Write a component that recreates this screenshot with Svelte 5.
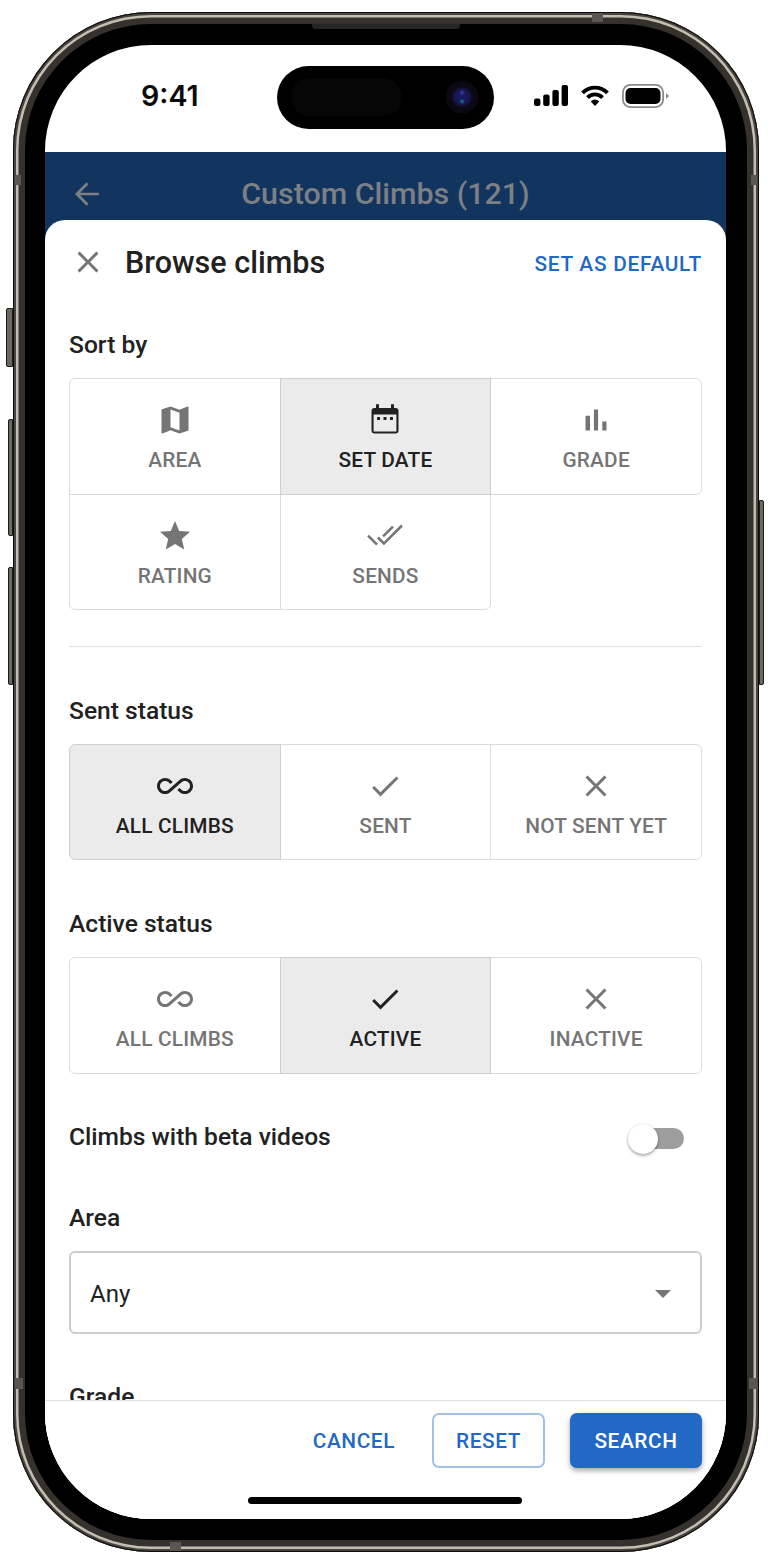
<script lang="ts">
  const check = 'M9 16.17L4.83 12l-1.42 1.41L9 19 21 7l-1.41-1.41z';
  const close = 'M19 6.41L17.59 5 12 10.59 6.41 5 5 6.41 10.59 12 5 17.59 6.41 19 12 13.41 17.59 19 19 17.59 13.41 12z';
  const infinity =
    'M18.6 6.62c-1.44 0-2.8.56-3.77 1.53L12 10.66 10.48 12h.01L7.8 14.39c-.64.64-1.49.99-2.4.99-1.87 0-3.39-1.51-3.39-3.38S3.53 8.62 5.4 8.62c.91 0 1.76.35 2.44 1.03l1.13 1 1.51-1.34L9.22 8.2C8.2 7.18 6.84 6.62 5.4 6.62 2.42 6.62 0 9.04 0 12s2.42 5.38 5.4 5.38c1.44 0 2.8-.56 3.77-1.53l2.83-2.5.01.01L13.52 12h-.01l2.69-2.39c.64-.64 1.49-.99 2.4-.99 1.87 0 3.39 1.51 3.39 3.38s-1.52 3.38-3.39 3.38c-.9 0-1.76-.35-2.44-1.03l-1.14-1.01-1.51 1.34 1.27 1.12c1.02 1.01 2.37 1.57 3.82 1.57 2.98 0 5.4-2.41 5.4-5.38s-2.42-5.37-5.4-5.37z';

  const sortOptions = [
    { label: 'AREA', icon: 'M20.5 3l-.16.03L15 5.1 9 3 3.36 4.9c-.21.07-.36.25-.36.48V20.5c0 .28.22.5.5.5l.16-.03L9 18.9l6 2.1 5.64-1.9c.21-.07.36-.25.36-.48V3.5c0-.28-.22-.5-.5-.5zM15 19l-6-2.11V5l6 2.11V19z' },
    { label: 'SET DATE', active: true, icon: 'M19 4h-1V1.5h-2V4H8V1.5H6V4H5a2 2 0 00-2 2v13a2 2 0 002 2h14a2 2 0 002-2V6a2 2 0 00-2-2zm.6 15.6H4.4V8.4h15.2v11.2zM6.7 10h2v2h-2zm4.3 0h2v2h-2zm4.3 0h2v2h-2z' },
    { label: 'GRADE', icon: 'M5 9.2h3V19H5zM10.6 5h2.8v14h-2.8zm5.6 8H19v6h-2.8z' },
    { label: 'RATING', icon: 'M12 17.27L18.18 21l-1.64-7.03L22 9.24l-7.19-.61L12 2 9.19 8.63 2 9.24l5.46 4.73L5.82 21z' },
    { label: 'SENDS', icon: 'M1.3 11.1l6 6-1.2 1.2-6-6zM7.9 12.4l3.4 3.4L22.7 4.4l1.2 1.2-12.6 12.6-4.6-4.6zM10.1 11.7l6.6-6.6 1.2 1.2-6.6 6.6z' }
  ];
  const sentOptions = [
    { label: 'ALL CLIMBS', active: true, icon: infinity },
    { label: 'SENT', icon: check },
    { label: 'NOT SENT YET', icon: close }
  ];
  const activeOptions = [
    { label: 'ALL CLIMBS', icon: infinity },
    { label: 'ACTIVE', active: true, icon: check },
    { label: 'INACTIVE', icon: close }
  ];
</script>

{#snippet toggleGroup(options)}
  <div class="group">
    {#each options as opt}
      <button type="button" class="opt" class:active={opt.active}>
        <svg width="36" height="36" viewBox="0 0 24 24" fill="currentColor"><path d={opt.icon} /></svg>
        <span>{opt.label}</span>
      </button>
    {/each}
  </div>
{/snippet}

<div class="phone">
  <span class="side vol-mute"></span>
  <span class="side vol-up"></span>
  <span class="side vol-down"></span>
  <span class="side power"></span>
  <span class="speaker"></span>
  <span class="band band-top"></span>
  <span class="band band-left-a"></span>
  <span class="band band-left-b"></span>
  <span class="band band-right-a"></span>
  <span class="band band-right-b"></span>
  <span class="band band-bottom"></span>

  <div class="screen">
    <div class="statusbar">
      <span class="time">9:41</span>
      <div class="island">
        <span class="island-dark"></span>
        <span class="lens"></span>
      </div>
      <div class="status-icons">
        <svg width="34" height="21" viewBox="0 0 34 21" fill="#000">
          <rect x="0" y="13.5" width="6.4" height="7.5" rx="2" />
          <rect x="9.2" y="9.5" width="6.4" height="11.5" rx="2" />
          <rect x="18.4" y="5" width="6.4" height="16" rx="2" />
          <rect x="27.6" y="0" width="6.4" height="21" rx="2" />
        </svg>
        <svg width="28" height="21" viewBox="0 0 28 21" fill="none" stroke="#000" stroke-width="3.8">
          <path d="M1.5 7.8a17.5 17.5 0 0 1 25 0" />
          <path d="M6.5 12.6a10.5 10.5 0 0 1 15 0" />
          <path d="M14 21l-4.2-4.6a5.8 5.8 0 0 1 8.4 0z" fill="#000" stroke="none" />
        </svg>
        <svg width="47" height="24" viewBox="0 0 47 24">
          <rect x="0.9" y="0.9" width="40.2" height="22.2" rx="7.5" fill="none" stroke="#8a8a8a" stroke-width="1.8" />
          <rect x="3.5" y="4" width="35" height="16" rx="5" fill="#000" />
          <path d="M44 9l3 3-3 3z" fill="#8a8a8a" />
        </svg>
      </div>
    </div>

    <header class="appbar">
      <svg width="36" height="36" viewBox="0 0 24 24" fill="#7c7f83">
        <path d="M20 11.1H7.4l5.6-5.6L11.7 4.2 4 12l7.7 7.8 1.3-1.3-5.6-5.6H20z" />
      </svg>
      <span class="appbar-title">Custom Climbs (121)</span>
    </header>

    <div class="sheet">
      <div class="sheet-head">
        <svg class="close" width="36" height="36" viewBox="0 0 24 24" fill="#757575"><path d={close} /></svg>
        <h1>Browse climbs</h1>
        <button type="button" class="link">SET AS DEFAULT</button>
      </div>

      <div class="sheet-body">
        <h2>Sort by</h2>
        {@render toggleGroup(sortOptions)}
        <hr />
        <h2>Sent status</h2>
        {@render toggleGroup(sentOptions)}
        <h2 class="next">Active status</h2>
        {@render toggleGroup(activeOptions)}

        <div class="switch-row">
          <h2>Climbs with beta videos</h2>
          <span class="switch"><span class="thumb"></span></span>
        </div>

        <h2 class="area">Area</h2>
        <div class="select">
          <span>Any</span>
          <svg width="16" height="8" viewBox="0 0 16 8" fill="#757575"><path d="M0 0h16L8 8z" /></svg>
        </div>

        <h2 class="grade">Grade</h2>
      </div>

      <footer class="sheet-foot">
        <button type="button" class="btn text">CANCEL</button>
        <button type="button" class="btn outlined">RESET</button>
        <button type="button" class="btn filled">SEARCH</button>
        <span class="home"></span>
      </footer>
    </div>
  </div>
</div>

<style>
  :global(body) {
    margin: 0;
    background: #fff;
    font-family: Roboto, "Liberation Sans", sans-serif;
  }

  .phone {
    position: relative;
    box-sizing: border-box;
    width: 746px;
    height: 1540px;
    margin: 12px 0 0 13px;
    padding: 33px 33px 33px 32px;
    border-radius: 138px;
    background: #000;
    box-shadow:
      inset 0 0 0 1px #0c0c0c,
      inset 0 0 0 3px #48443f,
      inset 0 0 0 5.5px #c4bdb2,
      inset 0 0 0 12px #35322e;
  }

  .side {
    position: absolute;
    box-sizing: border-box;
    background: #6d6862;
    border: 1.5px solid #1a1a1a;
    border-radius: 2px 0 0 2px;
  }

  .vol-mute { left: -7px; top: 296px; width: 7px; height: 59px; }
  .vol-up { left: -5px; top: 407px; width: 5px; height: 117px; }
  .vol-down { left: -5px; top: 555px; width: 5px; height: 118px; }
  .power { right: -5px; top: 488px; width: 5px; height: 185px; border-radius: 0 2px 2px 0; }

  .speaker {
    position: absolute;
    left: 299px;
    top: 12px;
    width: 148px;
    height: 5px;
    border-radius: 0 0 4px 4px;
    background: #262626;
  }

  .band {
    position: absolute;
    background: #5a5753;
  }

  .band-top { left: 579px; top: 1px; width: 11px; height: 9px; }
  .band-left-a { left: 2px; top: 163px; width: 6px; height: 10px; }
  .band-left-b { left: 2px; top: 1366px; width: 8px; height: 11px; }
  .band-right-a { right: 2px; top: 163px; width: 6px; height: 10px; }
  .band-right-b { right: 2px; top: 1366px; width: 8px; height: 11px; }
  .band-bottom { left: 157px; bottom: 1px; width: 11px; height: 9px; }

  .screen {
    display: flex;
    flex-direction: column;
    height: 100%;
    overflow: hidden;
    border-radius: 106px;
    background: #fff;
  }

  .statusbar {
    position: relative;
    display: flex;
    flex: none;
    align-items: center;
    justify-content: space-between;
    height: 107px;
    padding: 0 57px 6px 96px;
    box-sizing: border-box;
  }

  .time {
    font-family: Inter, "Liberation Sans", sans-serif;
    font-size: 28.6px;
    font-weight: 600;
    color: #0a0a0a;
  }

  .island {
    position: absolute;
    left: 232px;
    top: 20.5px;
    width: 217px;
    height: 63px;
    border-radius: 32px;
    background: #000;
  }

  .island-dark {
    position: absolute;
    left: 14px;
    top: 12.5px;
    width: 111px;
    height: 38px;
    border-radius: 19px;
    background: #060606;
  }

  .lens {
    position: absolute;
    left: 168px;
    top: 14.5px;
    width: 34px;
    height: 34px;
    border-radius: 50%;
    background:
      radial-gradient(circle at 50% 63%, #1a7a86 0, rgba(26, 122, 134, 0) 3px),
      radial-gradient(circle at 50% 37%, #3a3fb0 0, rgba(58, 63, 176, 0) 3px),
      radial-gradient(circle, #1a1b66 0, #15154f 8px, #0c0a14 10px, #0a0710 16px, #000 17px);
  }

  .status-icons {
    display: flex;
    align-items: center;
    gap: 13px;
  }

  .appbar {
    display: flex;
    flex: none;
    align-items: flex-start;
    height: 110px;
    margin-bottom: -42px;
    padding: 24px 24px 0 24px;
    box-sizing: border-box;
    background: #12355f;
  }

  .appbar-title {
    flex: 1;
    padding-right: 36px;
    text-align: center;
    font-size: 30.4px;
    font-weight: 500;
    line-height: 36px;
    color: #7c7f83;
  }

  .sheet {
    position: relative;
    display: flex;
    flex: 1;
    flex-direction: column;
    min-height: 0;
    border-radius: 20px 20px 0 0;
    background: #fff;
  }

  .sheet-head {
    display: flex;
    flex: none;
    align-items: center;
    height: 86px;
    padding: 0 24px 2px 25px;
    box-sizing: border-box;
  }

  .close {
    margin-right: 19px;
  }

  h1 {
    flex: 1;
    margin: 0;
    font-size: 30.5px;
    font-weight: 500;
    color: #212121;
  }

  .link {
    padding: 4px 0 0;
    border: 0;
    background: none;
    font: 500 20.8px Roboto, sans-serif;
    letter-spacing: 0.75px;
    color: #2268c5;
  }

  .sheet-body {
    flex: 1;
    min-height: 0;
    overflow: hidden;
    padding: 25px 24px 0;
  }

  h2 {
    margin: 0;
    padding-bottom: 2px;
    font-size: 24.6px;
    font-weight: 500;
    line-height: 28px;
    color: #212121;
  }

  .group {
    display: grid;
    grid-template-columns: repeat(3, 1fr);
    grid-auto-rows: 115.5px;
    margin: 17px 1px 0 0;
  }

  .opt {
    display: flex;
    flex-direction: column;
    align-items: center;
    box-sizing: border-box;
    margin: 0 -1px -1px 0;
    padding: 23px 0 0;
    border: 1px solid #dcdcdc;
    background: #fff;
    font: 500 20.8px Roboto, sans-serif;
    letter-spacing: 0.2px;
    color: #757575;
  }

  .opt:first-child { border-top-left-radius: 6px; }
  .opt:nth-child(3) { border-top-right-radius: 6px; border-bottom-right-radius: 6px; }
  .opt:nth-child(3):last-child { border-bottom-left-radius: 0; }
  .opt:nth-child(3n + 1):nth-last-child(-n + 3) { border-bottom-left-radius: 6px; }
  .opt:last-child { border-bottom-right-radius: 6px; }

  .opt.active {
    z-index: 1;
    position: relative;
    border-color: #cfcfcf;
    background: #ebebeb;
    color: #212121;
  }

  .opt span {
    margin-top: 10px;
  }

  hr {
    height: 1px;
    margin: 37px 0 49.5px;
    border: 0;
    background: #e0e0e0;
  }

  .next {
    margin-top: 51px;
  }

  .switch-row {
    display: flex;
    align-items: center;
    justify-content: space-between;
    margin-top: 50px;
    padding-right: 18px;
  }

  .switch {
    position: relative;
    display: block;
    width: 54px;
    height: 21px;
    margin-top: 2px;
    border-radius: 11px;
    background: #9e9e9e;
  }

  .thumb {
    position: absolute;
    left: -2px;
    top: -4.5px;
    width: 30px;
    height: 30px;
    border-radius: 50%;
    background: #fff;
    box-shadow: 0 2px 3px rgba(0, 0, 0, 0.3), 0 0 2px rgba(0, 0, 0, 0.15);
  }

  .area {
    margin-top: 51px;
  }

  .select {
    display: flex;
    align-items: center;
    justify-content: space-between;
    box-sizing: border-box;
    height: 83px;
    margin-top: 17px;
    padding: 3px 29px 0 19px;
    border: 2px solid #cdcdcd;
    border-radius: 6px;
    font-size: 24px;
    color: #212121;
  }

  .grade {
    margin-top: 49px;
  }

  .sheet-foot {
    position: relative;
    display: flex;
    flex: none;
    align-items: flex-start;
    justify-content: flex-end;
    gap: 24px;
    height: 119px;
    padding: 12px 24px 0;
    box-sizing: border-box;
    border-top: 1.5px solid #e0e0e0;
    background: #fff;
  }

  .btn {
    box-sizing: border-box;
    height: 55px;
    border-radius: 7px;
    font: 500 20.8px Roboto, sans-serif;
    letter-spacing: 0.6px;
    color: #2268c5;
  }

  .text {
    padding: 0 13px;
    border: 0;
    background: none;
  }

  .outlined {
    width: 113px;
    margin-right: 1px;
    border: 2px solid #a3c0e9;
    background: #fff;
  }

  .filled {
    width: 132px;
    border: 0;
    background: #2268c5;
    color: #fff;
    box-shadow: 0 3px 4px rgba(0, 0, 0, 0.25), 0 1px 8px rgba(0, 0, 0, 0.12);
  }

  .home {
    position: absolute;
    left: 203px;
    bottom: 15px;
    width: 274px;
    height: 7px;
    border-radius: 4px;
    background: #000;
  }
</style>
